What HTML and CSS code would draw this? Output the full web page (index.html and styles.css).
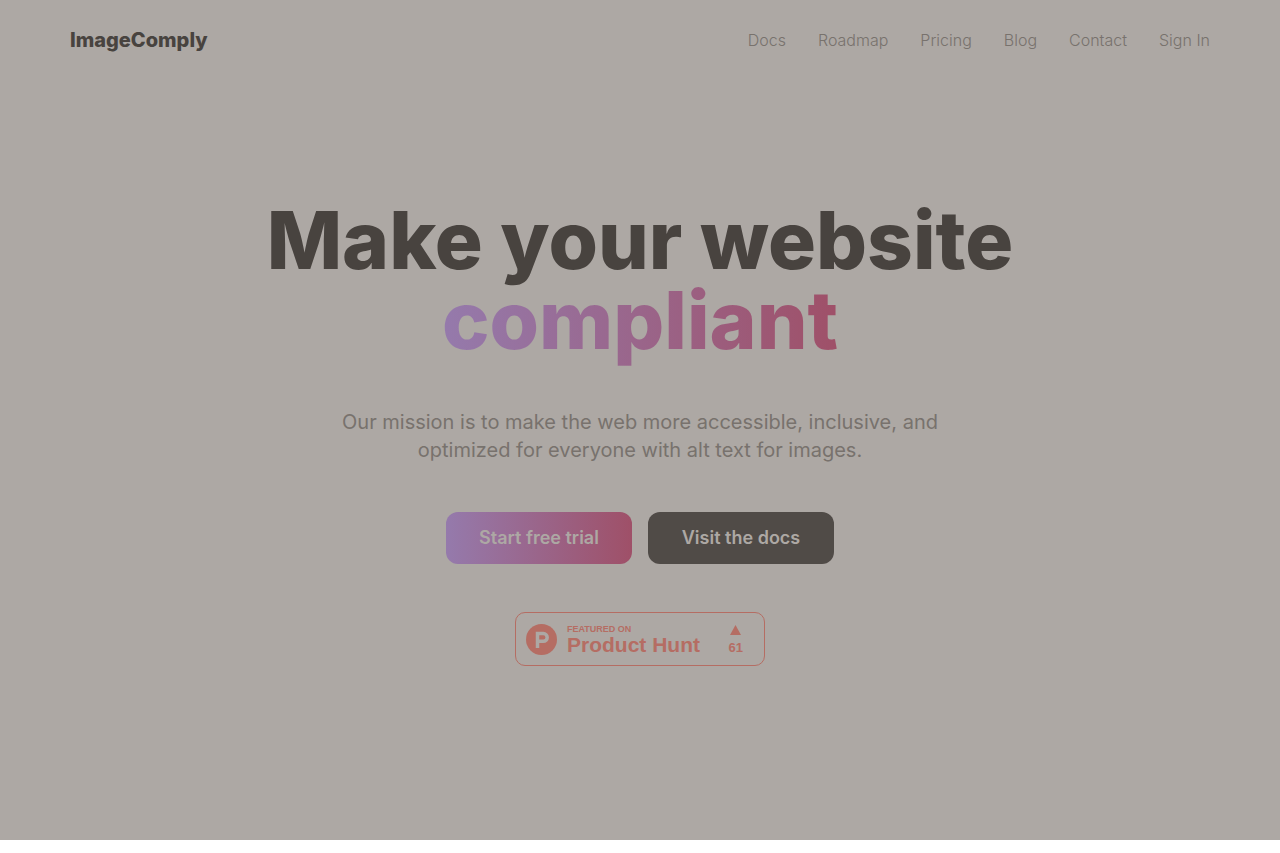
FILE: index.html
```html
<!DOCTYPE html>
<html lang="en">
<head>
    <meta charset="UTF-8">
    <meta name="viewport" content="width=device-width, initial-scale=1.0">
    <title>ImageComply</title>
    <link rel="stylesheet" href="styles.css">
</head>

<body>
    <div class="page">
        <header class="header">
            <a class="logo" href="#">ImageComply</a>
            <nav class="nav">
                <a href="#">Docs</a>
                <a href="#">Roadmap</a>
                <a href="#">Pricing</a>
                <a href="#">Blog</a>
                <a href="#">Contact</a>
                <a href="#">Sign In</a>
            </nav>
        </header>

        <main class="hero">
            <h1>Make your website <span class="gradient-txt">compliant</span></h1>
            <p>Our mission is to make the web more accessible, inclusive, and optimized for everyone with alt text for images.</p>

            <div class="btn-list">
                <button type="button" class="btn trial-btn">Start free trial</button>
                <button type="button" class="btn docs-btn">Visit the docs</button>
            </div>

            <a class="badge" href="#">
                <svg class="badge-icon" width="31" height="31" viewBox="0 0 31 31" aria-hidden="true">
                    <circle fill="currentColor" cx="15.5" cy="15.500" r="15.5" />
                    <path fill="none" stroke="#ada8a4" stroke-width="3.500" d="M11.500 24V9.500h5.800a3.900 3.900 0 0 1 0 7.800h-5.800" />
                </svg>
                <span class="badge-txt">
                    <span class="badge-label">FEATURED ON</span>
                    <span class="badge-name">Product Hunt</span>
                </span>
                <span class="badge-votes">
                    <svg width="11" height="10" viewBox="0 0 11 10" aria-hidden="true">
                        <path fill="currentColor" d="M5.500 0L11 10H0z" />
                    </svg>
                    <span>61</span>
                </span>
            </a>
        </main>
    </div>
</body>

</html>
```
FILE: styles.css
```css
* {
    box-sizing: border-box;
}

body {
    margin: 0;
    background-color: #fff;
    font-family: Inter, "Liberation Sans", sans-serif;
}

a {
    color: inherit;
    text-decoration: none;
}

.page {
    background-color: #ada8a4;
    color: #48433f;
}

.header {
    display: flex;
    align-items: center;
    justify-content: space-between;
    max-width: 1180px;
    height: 80px;
    margin: 0 auto;
    padding: 0 20px;
}

.logo {
    font-size: 20px;
    font-weight: 800;
}

.nav {
    display: flex;
    gap: 32px;
    color: #78726d;
    font-size: 16px;
    font-weight: 300;
}

.hero {
    display: flex;
    flex-direction: column;
    align-items: center;
    padding: 120px 20px 174px;
    text-align: center;
}

.hero h1 {
    max-width: 800px;
    margin: 0;
    font-size: 80px;
    font-weight: 800;
    line-height: 80px;
}

.hero p {
    max-width: 640px;
    margin: 48px 0;
    color: #78726d;
    font-size: 20px;
    line-height: 28px;
}

.gradient-txt,
.trial-btn {
    background-image: linear-gradient(to right, #957aac, #9f5068);
}

.gradient-txt {
    background-clip: text;
    -webkit-background-clip: text;
    color: transparent;
}

.btn-list {
    display: flex;
    flex-wrap: wrap;
    justify-content: center;
    gap: 16px;
}

.btn {
    min-width: 186px;
    padding: 12px 32px;
    border: 0;
    border-radius: 12px;
    color: #ada8a4;
    cursor: pointer;
    font-family: inherit;
    font-size: 18px;
    font-weight: 600;
    line-height: 28px;
}

.docs-btn {
    background-color: #504b47;
}

.badge {
    display: flex;
    align-items: center;
    width: 250px;
    height: 54px;
    margin-top: 48px;
    padding: 0 21px 0 10px;
    border: 1px solid #b56d63;
    border-radius: 10px;
    color: #b56d63;
    font-family: "Liberation Sans", sans-serif;
    font-weight: 700;
}

.badge-txt {
    display: flex;
    flex-direction: column;
    margin-left: 10px;
    padding-top: 2px;
    text-align: left;
}

.badge-label {
    font-size: 9px;
    line-height: 10px;
}

.badge-name {
    font-size: 21px;
    line-height: 22px;
}

.badge-votes {
    display: flex;
    flex-direction: column;
    align-items: center;
    gap: 5px;
    margin-left: auto;
    padding-top: 3px;
    font-size: 13px;
    line-height: 16px;
}
```
